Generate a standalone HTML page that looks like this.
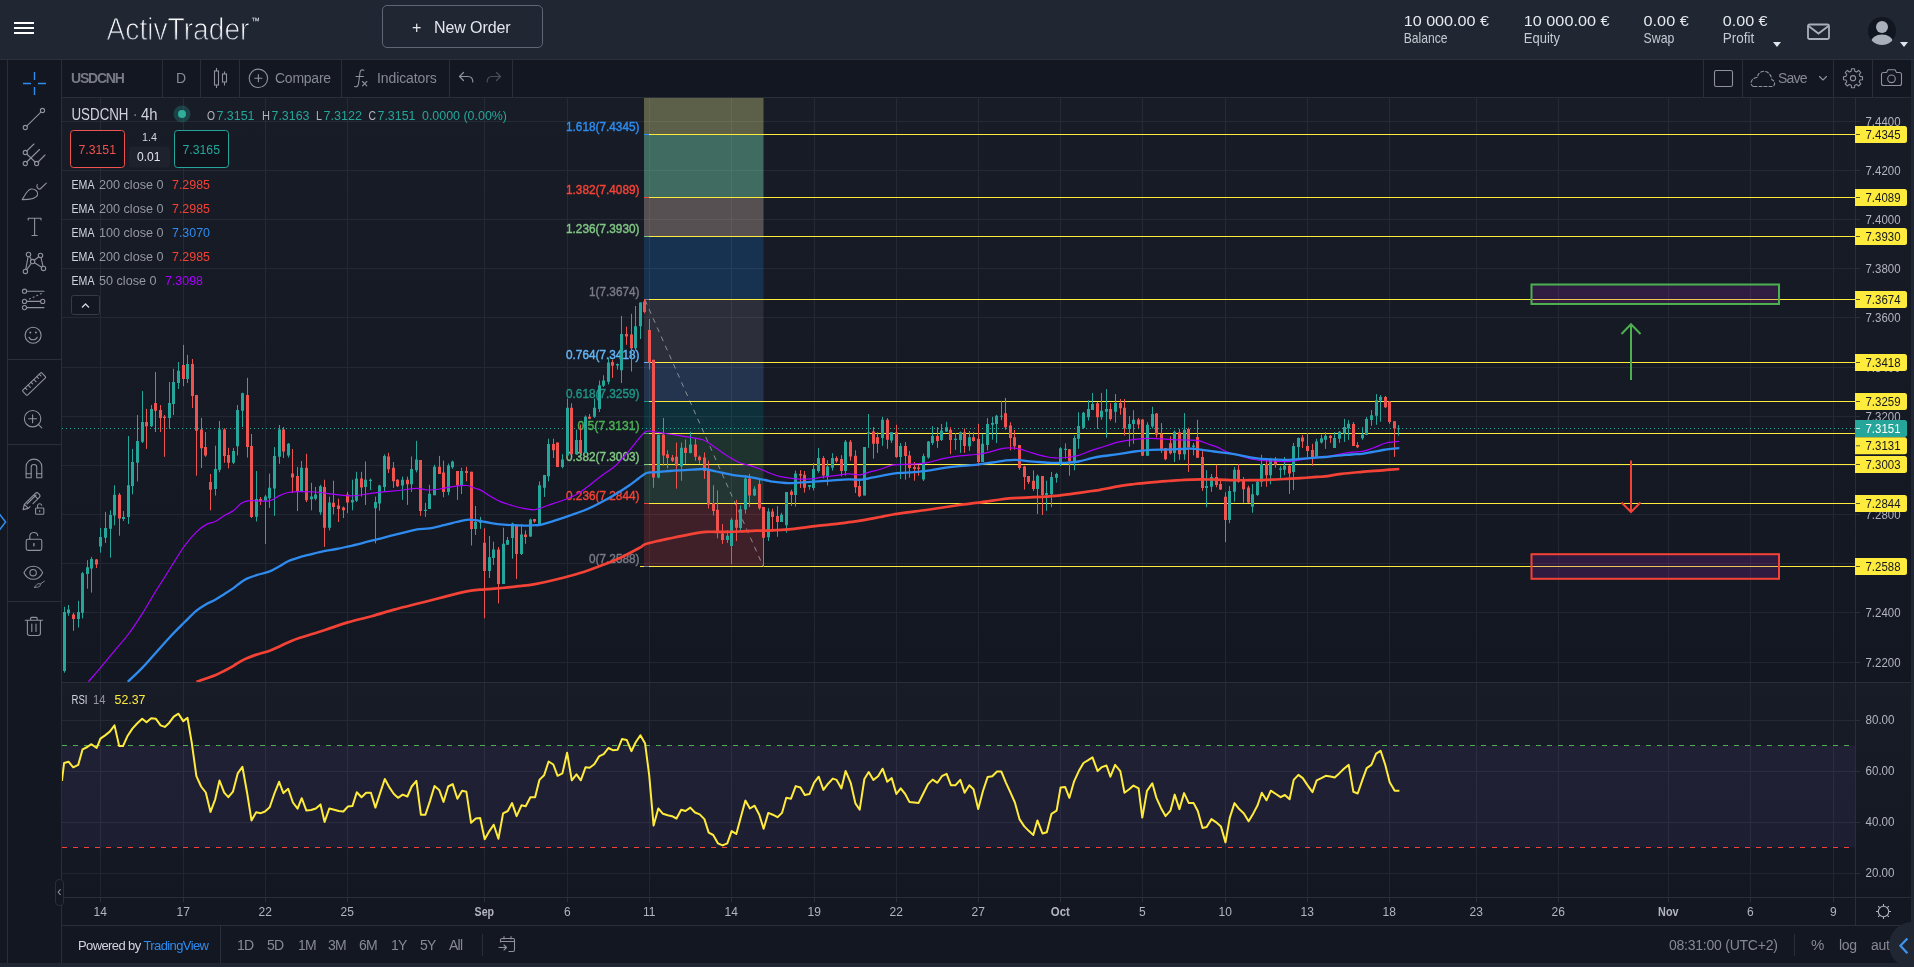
<!DOCTYPE html>
<html><head><meta charset="utf-8"><title>ActivTrader</title><style>
*{box-sizing:border-box;margin:0;padding:0}
html,body{width:1914px;height:967px;overflow:hidden;background:#131722;font-family:"Liberation Sans",sans-serif;color:#b2b5be}
.abs{position:absolute;white-space:nowrap}
#hdr{position:absolute;left:0;top:0;width:1914px;height:59px;background:#202632}
#hdrline{position:absolute;left:0;top:59px;width:1914px;height:1px;background:#2b303c}
#botstrip{position:absolute;left:0;top:963px;width:1914px;height:4px;background:#202632}
#rstrip{position:absolute;left:1911px;top:60px;width:3px;height:903px;background:#202632}
.vl{position:absolute;width:1px;background:#2a2e39}
.hl{position:absolute;height:1px;background:#2a2e39}
.t14{font-size:14px;color:#868993}
.hv{font-size:15px;color:#e3e6ec}
.hk{font-size:14px;color:#c3c8d2}
#chart{position:absolute;left:0;top:0}
</style></head><body><div id="root" style="position:absolute;left:0;top:0;width:1914px;height:967px;will-change:transform">
<svg id="chart" width="1914" height="967" viewBox="0 0 1914 967">
<defs><clipPath id="cm"><rect x="62" y="98" width="1793" height="584"/></clipPath><clipPath id="cr"><rect x="62" y="683" width="1793" height="214"/></clipPath><linearGradient id="pg" x1="0" y1="0" x2="0" y2="1"><stop offset="0" stop-color="#181c27"/><stop offset="1" stop-color="#131722"/></linearGradient></defs>
<rect x="62" y="98" width="1849" height="584" fill="url(#pg)"/>
<rect x="62" y="683" width="1849" height="214" fill="url(#pg)"/>
<rect x="62" y="745.5" width="1793" height="102" fill="#7e57c2" fill-opacity="0.1"/>
<rect x="644" y="98" width="119.500" height="36.5" fill="#5d6048"/>
<rect x="644" y="134.5" width="119.500" height="63.0" fill="#406b60"/>
<rect x="644" y="197.5" width="119.500" height="39.0" fill="#565052"/>
<rect x="644" y="236.5" width="119.500" height="63.0" fill="#163250"/>
<rect x="644" y="299.5" width="119.500" height="63.0" fill="#2c2f3a"/>
<rect x="644" y="362.5" width="119.500" height="39.0" fill="#24344e"/>
<rect x="644" y="401.5" width="119.500" height="32.0" fill="#0e303a"/>
<rect x="644" y="433.5" width="119.500" height="31.0" fill="#1e322e"/>
<rect x="644" y="464.5" width="119.500" height="39.0" fill="#243634"/>
<rect x="644" y="503.5" width="119.500" height="63.0" fill="#402028"/>
<path d="M100.5 98V897M183.5 98V897M265.5 98V897M347.5 98V897M484.5 98V897M567.5 98V897M649.5 98V897M731.5 98V897M814.5 98V897M896.5 98V897M978.5 98V897M1060.5 98V897M1142.5 98V897M1225.5 98V897M1307.5 98V897M1389.5 98V897M1476.5 98V897M1558.5 98V897M1668.5 98V897M1750.5 98V897M1833.5 98V897M62 121.5H1855M62 170.5H1855M62 219.5H1855M62 268.5H1855M62 317.5H1855M62 367.5H1855M62 416.5H1855M62 465.5H1855M62 514.5H1855M62 563.5H1855M62 612.5H1855M62 662.5H1855M62 720.5H1855M62 771.5H1855M62 822.5H1855M62 873.5H1855" stroke="#f0f3fa" stroke-opacity="0.065" stroke-width="1" fill="none" shape-rendering="crispEdges"/>
<path d="M645 300L763 566" stroke="#8a8d96" stroke-width="1" stroke-dasharray="5 5" fill="none"/>
<path d="M62 428.500H1855" stroke="#26a69a" stroke-width="1" stroke-dasharray="1 3" fill="none" shape-rendering="crispEdges"/>
<path d="M644 134.5H1855M644 197.5H1855M644 236.5H1855M644 299.5H1855M644 362.5H1855M644 401.5H1855M644 433.5H1855M644 464.5H1855M644 503.5H1855M640 566.5H1855" stroke="#ffeb3b" stroke-width="1" fill="none" shape-rendering="crispEdges"/>
<path d="M644 134.5H649" stroke="#2e8cf0" stroke-width="1" shape-rendering="crispEdges"/>
<path d="M644 197.5H649" stroke="#f44336" stroke-width="1" shape-rendering="crispEdges"/>
<path d="M644 236.5H649" stroke="#81c784" stroke-width="1" shape-rendering="crispEdges"/>
<path d="M644 299.5H649" stroke="#787b86" stroke-width="1" shape-rendering="crispEdges"/>
<path d="M644 362.5H649" stroke="#64b5f6" stroke-width="1" shape-rendering="crispEdges"/>
<path d="M644 401.5H649" stroke="#1f9485" stroke-width="1" shape-rendering="crispEdges"/>
<path d="M644 433.5H649" stroke="#4caf50" stroke-width="1" shape-rendering="crispEdges"/>
<path d="M644 464.5H649" stroke="#81c784" stroke-width="1" shape-rendering="crispEdges"/>
<path d="M644 503.5H649" stroke="#f44336" stroke-width="1" shape-rendering="crispEdges"/>
<path d="M644 566.5H649" stroke="#787b86" stroke-width="1" shape-rendering="crispEdges"/>
<text x="639.500" y="130.9" text-anchor="end" font-family="Liberation Sans, sans-serif" font-size="12" fill="#2e8cf0" stroke="#2e8cf0" stroke-width="0.400" textLength="73.5" lengthAdjust="spacingAndGlyphs">1.618(7.4345)</text>
<text x="639.500" y="193.9" text-anchor="end" font-family="Liberation Sans, sans-serif" font-size="12" fill="#f44336" stroke="#f44336" stroke-width="0.400" textLength="73.5" lengthAdjust="spacingAndGlyphs">1.382(7.4089)</text>
<text x="639.500" y="232.9" text-anchor="end" font-family="Liberation Sans, sans-serif" font-size="12" fill="#81c784" stroke="#81c784" stroke-width="0.400" textLength="73.5" lengthAdjust="spacingAndGlyphs">1.236(7.3930)</text>
<text x="639.500" y="295.9" text-anchor="end" font-family="Liberation Sans, sans-serif" font-size="12" fill="#787b86" stroke="#787b86" stroke-width="0.400" textLength="50.5" lengthAdjust="spacingAndGlyphs">1(7.3674)</text>
<text x="639.500" y="358.9" text-anchor="end" font-family="Liberation Sans, sans-serif" font-size="12" fill="#64b5f6" stroke="#64b5f6" stroke-width="0.400" textLength="73.5" lengthAdjust="spacingAndGlyphs">0.764(7.3418)</text>
<text x="639.500" y="397.9" text-anchor="end" font-family="Liberation Sans, sans-serif" font-size="12" fill="#1f9485" stroke="#1f9485" stroke-width="0.400" textLength="73.5" lengthAdjust="spacingAndGlyphs">0.618(7.3259)</text>
<text x="639.500" y="429.9" text-anchor="end" font-family="Liberation Sans, sans-serif" font-size="12" fill="#4caf50" stroke="#4caf50" stroke-width="0.400" textLength="62" lengthAdjust="spacingAndGlyphs">0.5(7.3131)</text>
<text x="639.500" y="460.9" text-anchor="end" font-family="Liberation Sans, sans-serif" font-size="12" fill="#81c784" stroke="#81c784" stroke-width="0.400" textLength="73.5" lengthAdjust="spacingAndGlyphs">0.382(7.3003)</text>
<text x="639.500" y="499.9" text-anchor="end" font-family="Liberation Sans, sans-serif" font-size="12" fill="#f44336" stroke="#f44336" stroke-width="0.400" textLength="73.5" lengthAdjust="spacingAndGlyphs">0.236(7.2844)</text>
<text x="639.500" y="562.9" text-anchor="end" font-family="Liberation Sans, sans-serif" font-size="12" fill="#787b86" stroke="#787b86" stroke-width="0.400" textLength="50.5" lengthAdjust="spacingAndGlyphs">0(7.2588)</text>
<g clip-path="url(#cm)">
<path d="M64.5 606.8V672.7M68.5 605.0V615.8M78.5 600.8V627.5M82.5 571.9V618.4M87.5 560.2V588.7M91.5 556.9V592.6M100.5 527.9V552.7M105.5 511.9V542.9M110.5 510.3V557.7M114.5 485.3V525.3M123.5 511.0V521.0M128.5 436.0V524.0M132.5 449.0V494.3M137.5 415.0V481.4M142.5 391.0V443.0M151.5 405.0V427.0M169.5 382.0V428.9M173.5 368.8V415.0M178.5 362.0V389.0M187.5 354.8V383.0M215.5 445.7V495.6M219.5 421.0V472.3M233.5 447.9V464.0M237.5 405.0V455.5M242.5 392.7V427.0M256.5 471.0V521.5M265.5 494.8V544.0M269.5 473.6V507.8M274.5 447.0V515.8M279.5 425.0V463.8M288.5 443.0V457.6M301.5 461.0V492.0M311.5 482.8V510.3M315.5 486.9V500.3M320.5 484.8V514.8M329.5 496.6V530.4M352.5 479.7V510.3M356.5 471.8V502.0M365.5 461.5V504.9M370.5 478.6V490.0M375.5 496.6V543.4M379.5 484.8V510.7M384.5 454.4V491.7M402.5 476.6V499.9M411.5 456.5V492.0M416.5 440.8V472.4M425.5 502.8V516.9M429.5 484.8V509.0M434.5 464.8V495.2M448.5 463.5V495.2M452.5 460.6V468.9M461.5 467.7V494.0M475.5 506.0V535.0M480.5 516.9V528.9M489.5 536.0V578.0M493.5 541.7V565.0M503.5 527.7V584.0M507.5 537.0V545.0M512.5 522.7V558.7M521.5 524.0V555.0M530.5 518.6V537.0M539.5 481.4V525.3M544.5 474.9V496.9M548.5 438.7V481.4M562.5 454.2V468.4M567.5 398.6V455.5M576.5 429.6V454.2M585.5 415.4V452.9M594.5 398.6V418.0M599.5 380.5V412.0M603.5 375.3V387.0M608.5 357.8V384.4M617.5 363.5V369.6M621.5 315.9V383.0M635.5 306.0V350.0M640.5 302.4V339.0M658.5 434.8V478.3M681.5 442.6V480.8M690.5 431.7V453.4M727.5 530.2V543.0M731.5 517.8V564.1M740.5 505.4V531.0M745.5 475.1V513.7M754.5 486.3V496.0M768.5 508.2V541.0M781.5 512.8V522.0M786.5 492.1V532.7M795.5 470.6V506.5M809.5 485.0V489.7M813.5 463.2V490.5M818.5 447.9V472.8M827.5 460.2V485.5M832.5 453.2V470.6M845.5 440.0V475.6M864.5 447.0V495.4M868.5 414.0V447.9M882.5 416.8V445.9M891.5 432.2V443.0M900.5 443.0V479.0M923.5 453.7V481.0M928.5 441.0V458.7M932.5 426.1V445.0M941.5 423.9V441.0M946.5 421.8V432.0M955.5 433.0V449.9M960.5 431.5V452.9M969.5 431.0V450.9M982.5 433.9V462.0M987.5 418.1V450.4M992.5 416.8V439.7M996.5 414.8V443.0M1001.5 400.8V420.1M1037.5 474.4V514.1M1046.5 480.7V510.8M1051.5 471.9V507.2M1056.5 472.8V482.7M1060.5 447.1V466.1M1065.5 443.3V458.7M1074.5 435.5V470.3M1078.5 412.3V448.8M1083.5 411.8V428.9M1088.5 400.3V420.6M1092.5 393.0V410.0M1101.5 392.9V419.8M1106.5 389.1V437.6M1115.5 394.1V422.7M1129.5 416.1V446.6M1133.5 410.2V443.8M1147.5 422.2V456.0M1152.5 406.8V428.4M1174.5 430.5V462.0M1184.5 413.1V459.8M1193.5 442.9V455.3M1206.5 470.2V507.2M1211.5 474.0V491.8M1229.5 486.0V523.2M1234.5 466.9V501.7M1252.5 484.0V512.8M1257.5 479.3V495.9M1261.5 454.8V486.8M1270.5 457.8V484.3M1280.5 466.1V479.0M1284.5 457.0V475.2M1293.5 442.9V490.1M1298.5 437.5V458.7M1316.5 438.8V458.0M1321.5 434.7V443.5M1325.5 432.1V448.9M1334.5 432.1V448.0M1339.5 431.0V442.9M1344.5 418.9V441.9M1348.5 420.2V439.8M1362.5 427.2V439.8M1366.5 417.1V435.0M1371.5 410.0V425.9M1376.5 394.1V424.8M1380.5 395.1V421.7M1398.5 425.1V435.7" stroke="#26a69a" stroke-width="1" fill="none"/>
<path d="M73.5 612.7V630.8M96.5 559.0V568.0M119.5 493.0V535.7M146.5 408.8V448.9M155.5 372.0V432.0M160.5 405.0V432.0M164.5 415.0V456.8M183.5 344.9V386.2M192.5 359.0V408.0M196.5 395.0V475.7M201.5 417.9V468.0M205.5 432.0V456.8M210.5 474.0V510.3M224.5 428.2V462.8M228.5 447.8V468.4M247.5 377.8V457.6M251.5 434.0V518.0M260.5 497.0V505.0M283.5 427.0V458.0M292.5 449.0V493.0M297.5 467.0V511.0M306.5 453.8V502.0M324.5 479.7V546.9M333.5 480.7V514.4M338.5 498.7V522.0M343.5 506.5V518.0M347.5 491.7V513.2M361.5 471.8V496.6M388.5 452.8V473.0M393.5 462.0V487.9M397.5 479.2V487.0M407.5 476.6V504.9M420.5 460.0V515.9M439.5 455.9V474.0M443.5 460.6V497.2M457.5 471.0V499.9M466.5 466.8V481.3M471.5 471.8V545.5M484.5 528.3V618.3M498.5 547.0V603.4M516.5 524.8V579.0M525.5 530.4V543.8M534.5 518.9V522.7M553.5 438.7V458.0M557.5 442.6V467.1M571.5 403.3V454.2M580.5 424.5V452.9M589.5 414.0V419.3M612.5 359.8V377.9M626.5 326.7V344.8M631.5 313.8V371.5M644.5 299.0V313.3M649.5 319.0V369.6M653.5 359.8V487.8M663.5 418.0V465.8M667.5 450.3V468.4M672.5 455.0V462.0M676.5 442.6V488.6M685.5 439.5V463.8M695.5 438.7V460.7M699.5 455.5V463.8M704.5 452.4V478.8M708.5 460.7V508.5M713.5 485.2V515.5M717.5 490.4V538.3M722.5 524.1V543.9M736.5 499.9V541.0M749.5 473.9V507.0M759.5 478.9V509.8M763.5 507.0V567.1M772.5 508.7V531.4M777.5 506.2V536.8M791.5 489.7V505.9M800.5 470.1V488.0M804.5 471.1V492.6M823.5 456.2V478.4M836.5 456.2V462.8M841.5 455.2V476.4M850.5 440.0V460.7M855.5 450.3V493.0M859.5 479.4V497.1M873.5 427.2V458.7M877.5 432.2V452.9M887.5 418.1V448.8M896.5 424.8V457.9M905.5 442.1V479.7M909.5 450.9V477.7M914.5 462.0V480.7M918.5 465.0V475.7M937.5 427.2V447.9M950.5 427.2V454.2M964.5 428.4V452.9M973.5 432.2V441.6M978.5 423.9V466.1M1005.5 397.9V429.7M1010.5 422.3V450.4M1014.5 430.0V449.6M1019.5 445.0V469.8M1024.5 465.8V489.6M1028.5 476.0V484.0M1033.5 470.3V491.0M1042.5 476.0V515.0M1069.5 449.0V475.7M1097.5 402.0V428.9M1110.5 403.2V420.6M1120.5 399.1V414.8M1124.5 399.1V435.5M1138.5 418.1V428.0M1142.5 419.0V456.0M1156.5 413.0V437.6M1161.5 423.1V452.9M1165.5 448.0V460.3M1170.5 436.3V454.5M1179.5 428.9V459.8M1188.5 427.7V471.9M1197.5 419.8V458.0M1202.5 451.2V490.9M1216.5 464.8V487.3M1220.5 480.2V490.0M1225.5 492.3V542.2M1238.5 464.1V482.7M1243.5 476.9V502.8M1248.5 485.6V503.0M1266.5 459.8V486.8M1275.5 457.0V467.8M1289.5 465.0V493.9M1302.5 435.0V447.9M1307.5 433.0V457.0M1312.5 443.8V465.8M1330.5 435.0V442.9M1353.5 422.0V446.0M1357.5 442.1V448.1M1385.5 395.9V408.0M1389.5 401.0V423.8M1394.5 421.0V456.9" stroke="#ef5350" stroke-width="1" fill="none"/>
<path d="M63.0 612.0h3V671.0h-3zM67.0 609.4h3V613.3h-3zM77.0 612.0h3V619.0h-3zM81.0 573.2h3V612.7h-3zM86.0 567.2h3V574.0h-3zM90.0 559.0h3V568.5h-3zM99.0 537.0h3V546.5h-3zM104.0 527.9h3V537.7h-3zM109.0 515.0h3V528.7h-3zM113.0 494.8h3V515.5h-3zM122.0 517.0h3V518.9h-3zM127.0 485.3h3V517.0h-3zM131.0 462.0h3V486.0h-3zM136.0 441.0h3V462.8h-3zM141.0 422.0h3V441.8h-3zM150.0 409.0h3V426.3h-3zM168.0 403.0h3V417.9h-3zM172.0 382.0h3V404.0h-3zM177.0 370.7h3V383.0h-3zM186.0 363.9h3V379.0h-3zM214.0 469.0h3V489.0h-3zM218.0 429.5h3V469.7h-3zM232.0 450.9h3V462.8h-3zM236.0 409.9h3V446.3h-3zM241.0 393.3h3V410.8h-3zM255.0 499.0h3V516.8h-3zM264.0 496.4h3V500.8h-3zM268.0 487.8h3V498.2h-3zM273.0 456.0h3V488.6h-3zM278.0 429.5h3V456.8h-3zM287.0 443.7h3V455.5h-3zM300.0 467.7h3V491.7h-3zM310.0 496.6h3V499.3h-3zM314.0 494.6h3V498.7h-3zM319.0 486.3h3V512.3h-3zM328.0 502.4h3V527.7h-3zM351.0 500.0h3V502.4h-3zM355.0 478.6h3V500.8h-3zM364.0 479.7h3V486.9h-3zM369.0 479.7h3V480.9h-3zM374.0 502.0h3V508.2h-3zM378.0 485.5h3V503.5h-3zM383.0 455.9h3V486.9h-3zM401.0 479.7h3V485.5h-3zM410.0 468.9h3V484.2h-3zM415.0 459.4h3V470.3h-3zM424.0 509.7h3V511.0h-3zM428.0 493.7h3V509.0h-3zM433.0 466.8h3V495.2h-3zM447.0 465.6h3V492.0h-3zM451.0 461.4h3V467.2h-3zM460.0 471.0h3V485.5h-3zM474.0 522.0h3V528.9h-3zM479.0 521.0h3V522.7h-3zM488.0 557.2h3V571.0h-3zM492.0 549.6h3V557.9h-3zM502.0 543.8h3V584.0h-3zM506.0 540.0h3V544.8h-3zM511.0 523.5h3V538.0h-3zM520.0 534.5h3V554.0h-3zM529.0 519.4h3V536.6h-3zM538.0 485.2h3V524.0h-3zM543.0 474.9h3V487.8h-3zM547.0 443.9h3V476.2h-3zM561.0 459.4h3V467.1h-3zM566.0 407.7h3V455.5h-3zM575.0 440.0h3V454.2h-3zM584.0 416.7h3V452.9h-3zM593.0 407.7h3V416.7h-3zM598.0 385.2h3V409.0h-3zM602.0 380.5h3V385.7h-3zM607.0 362.4h3V381.8h-3zM616.0 364.0h3V365.5h-3zM620.0 334.0h3V370.2h-3zM634.0 326.2h3V348.2h-3zM639.0 302.4h3V326.2h-3zM657.0 434.8h3V477.5h-3zM680.0 447.7h3V466.4h-3zM689.0 444.6h3V452.9h-3zM726.0 535.7h3V540.1h-3zM730.0 519.8h3V545.9h-3zM739.0 509.2h3V528.1h-3zM744.0 478.4h3V509.5h-3zM753.0 488.8h3V495.4h-3zM767.0 511.5h3V537.3h-3zM780.0 514.8h3V521.9h-3zM785.0 492.1h3V525.2h-3zM794.0 473.4h3V495.0h-3zM808.0 485.0h3V486.7h-3zM812.0 469.0h3V488.0h-3zM817.0 457.9h3V471.1h-3zM826.0 466.5h3V476.1h-3zM831.0 457.9h3V467.8h-3zM844.0 441.7h3V471.1h-3zM863.0 447.0h3V495.4h-3zM867.0 432.2h3V433.9h-3zM881.0 419.8h3V438.0h-3zM890.0 432.2h3V440.5h-3zM899.0 445.9h3V457.0h-3zM922.0 455.9h3V479.4h-3zM927.0 441.6h3V457.5h-3zM931.0 436.0h3V443.0h-3zM940.0 430.6h3V440.0h-3zM945.0 427.2h3V431.4h-3zM954.0 438.8h3V440.0h-3zM959.0 432.2h3V440.0h-3zM968.0 437.2h3V446.3h-3zM981.0 443.8h3V462.0h-3zM986.0 423.9h3V445.0h-3zM991.0 423.1h3V424.8h-3zM995.0 415.7h3V423.9h-3zM1000.0 415.7h3V416.8h-3zM1036.0 475.7h3V489.0h-3zM1045.0 493.0h3V495.1h-3zM1050.0 476.9h3V494.3h-3zM1055.0 474.1h3V477.7h-3zM1059.0 448.3h3V464.2h-3zM1064.0 448.8h3V449.9h-3zM1073.0 438.0h3V461.5h-3zM1077.0 426.1h3V438.8h-3zM1082.0 412.8h3V427.7h-3zM1087.0 409.0h3V417.3h-3zM1091.0 404.1h3V409.9h-3zM1100.0 410.7h3V417.3h-3zM1105.0 409.0h3V411.8h-3zM1114.0 402.9h3V411.8h-3zM1128.0 423.9h3V428.9h-3zM1132.0 419.8h3V423.9h-3zM1146.0 424.7h3V455.8h-3zM1151.0 414.0h3V426.4h-3zM1173.0 431.7h3V452.9h-3zM1183.0 429.7h3V454.2h-3zM1192.0 445.4h3V447.1h-3zM1205.0 486.0h3V488.0h-3zM1210.0 476.9h3V486.8h-3zM1228.0 490.9h3V519.9h-3zM1233.0 469.7h3V491.8h-3zM1251.0 494.2h3V506.7h-3zM1256.0 481.8h3V495.1h-3zM1260.0 464.1h3V481.8h-3zM1269.0 459.2h3V475.2h-3zM1279.0 468.6h3V469.7h-3zM1283.0 465.8h3V469.7h-3zM1292.0 445.9h3V471.9h-3zM1297.0 438.0h3V447.1h-3zM1315.0 441.6h3V457.8h-3zM1320.0 438.3h3V442.6h-3zM1324.0 435.7h3V439.8h-3zM1333.0 438.0h3V447.9h-3zM1338.0 431.8h3V438.8h-3zM1343.0 426.9h3V433.4h-3zM1347.0 423.8h3V428.2h-3zM1361.0 434.4h3V438.3h-3zM1365.0 418.9h3V434.9h-3zM1370.0 415.2h3V420.0h-3zM1375.0 400.3h3V415.8h-3zM1379.0 396.9h3V400.5h-3zM1397.0 428.2h3V429.2h-3z" fill="#26a69a"/>
<path d="M72.0 614.6h3V619.0h-3zM95.0 559.5h3V564.6h-3zM118.0 494.8h3V518.4h-3zM145.0 422.0h3V426.3h-3zM154.0 403.0h3V410.8h-3zM159.0 410.0h3V417.9h-3zM163.0 416.8h3V418.0h-3zM182.0 364.9h3V379.0h-3zM191.0 363.9h3V395.9h-3zM195.0 395.0h3V430.8h-3zM200.0 429.5h3V448.3h-3zM204.0 447.0h3V455.5h-3zM209.0 481.9h3V489.7h-3zM223.0 429.5h3V456.0h-3zM227.0 455.0h3V462.8h-3zM246.0 395.0h3V447.0h-3zM250.0 446.0h3V517.0h-3zM259.0 499.0h3V501.5h-3zM282.0 429.5h3V451.6h-3zM291.0 473.6h3V477.5h-3zM296.0 476.0h3V491.7h-3zM305.0 467.7h3V500.3h-3zM323.0 486.9h3V527.7h-3zM332.0 502.8h3V507.0h-3zM337.0 505.5h3V509.0h-3zM342.0 507.6h3V510.3h-3zM346.0 494.6h3V502.4h-3zM360.0 478.6h3V487.5h-3zM387.0 456.5h3V469.3h-3zM392.0 467.7h3V481.3h-3zM396.0 479.7h3V486.3h-3zM406.0 479.7h3V484.2h-3zM419.0 460.0h3V511.0h-3zM438.0 466.8h3V473.9h-3zM442.0 472.4h3V492.0h-3zM456.0 471.0h3V485.5h-3zM465.0 471.0h3V473.0h-3zM470.0 471.8h3V528.9h-3zM483.0 542.8h3V571.0h-3zM497.0 549.6h3V584.0h-3zM515.0 524.8h3V554.0h-3zM524.0 534.5h3V537.0h-3zM533.0 518.9h3V521.4h-3zM552.0 443.9h3V450.3h-3zM556.0 442.6h3V467.1h-3zM570.0 407.7h3V454.2h-3zM579.0 440.0h3V452.9h-3zM588.0 416.7h3V418.8h-3zM611.0 361.9h3V365.8h-3zM625.0 334.0h3V336.5h-3zM630.0 334.5h3V348.2h-3zM643.0 301.6h3V312.0h-3zM648.0 330.0h3V362.4h-3zM652.0 359.8h3V477.5h-3zM662.0 434.8h3V455.5h-3zM666.0 454.2h3V458.0h-3zM671.0 457.6h3V460.7h-3zM675.0 456.8h3V465.8h-3zM684.0 447.7h3V452.9h-3zM694.0 444.6h3V456.8h-3zM698.0 456.8h3V460.2h-3zM703.0 457.6h3V471.0h-3zM707.0 469.7h3V504.6h-3zM712.0 503.3h3V511.1h-3zM716.0 509.8h3V533.0h-3zM721.0 533.5h3V540.1h-3zM735.0 519.8h3V527.7h-3zM748.0 478.4h3V495.4h-3zM758.0 483.9h3V508.2h-3zM762.0 507.0h3V537.7h-3zM771.0 511.5h3V517.0h-3zM776.0 516.1h3V521.9h-3zM790.0 491.6h3V495.0h-3zM799.0 473.9h3V475.6h-3zM803.0 474.8h3V487.7h-3zM822.0 457.9h3V475.6h-3zM835.0 457.9h3V461.2h-3zM840.0 459.0h3V471.1h-3zM849.0 441.7h3V456.6h-3zM854.0 455.7h3V487.2h-3zM858.0 486.0h3V496.3h-3zM872.0 431.4h3V443.8h-3zM876.0 437.2h3V443.8h-3zM886.0 419.8h3V439.7h-3zM895.0 432.2h3V457.0h-3zM904.0 445.9h3V455.9h-3zM908.0 455.4h3V468.1h-3zM913.0 467.0h3V469.1h-3zM917.0 467.5h3V469.1h-3zM936.0 436.0h3V441.0h-3zM949.0 429.7h3V440.0h-3zM963.0 432.2h3V445.9h-3zM972.0 437.2h3V441.0h-3zM977.0 438.8h3V462.0h-3zM1004.0 413.2h3V427.2h-3zM1009.0 425.6h3V438.0h-3zM1013.0 437.2h3V446.3h-3zM1018.0 445.0h3V468.1h-3zM1023.0 466.5h3V476.9h-3zM1027.0 476.1h3V481.9h-3zM1032.0 480.7h3V489.0h-3zM1041.0 476.1h3V495.1h-3zM1068.0 449.3h3V461.2h-3zM1096.0 403.2h3V417.3h-3zM1109.0 409.0h3V418.9h-3zM1119.0 402.9h3V408.2h-3zM1123.0 407.8h3V428.4h-3zM1137.0 419.4h3V424.4h-3zM1141.0 419.4h3V455.8h-3zM1155.0 413.5h3V434.7h-3zM1160.0 433.8h3V449.6h-3zM1164.0 448.2h3V459.2h-3zM1169.0 443.3h3V453.2h-3zM1178.0 432.2h3V454.2h-3zM1187.0 428.9h3V447.6h-3zM1196.0 437.1h3V457.8h-3zM1201.0 457.0h3V488.0h-3zM1215.0 476.9h3V485.1h-3zM1219.0 484.0h3V489.6h-3zM1224.0 496.7h3V519.9h-3zM1237.0 469.7h3V481.8h-3zM1242.0 479.3h3V489.3h-3zM1247.0 487.6h3V502.5h-3zM1265.0 464.1h3V475.2h-3zM1274.0 460.3h3V464.8h-3zM1288.0 465.8h3V473.6h-3zM1301.0 437.6h3V441.6h-3zM1306.0 445.9h3V450.9h-3zM1311.0 449.9h3V458.2h-3zM1329.0 435.7h3V438.0h-3zM1352.0 424.1h3V446.0h-3zM1356.0 445.0h3V447.3h-3zM1384.0 396.9h3V407.2h-3zM1388.0 401.6h3V422.0h-3zM1393.0 421.2h3V428.4h-3z" fill="#ef5350"/>
<path d="M88.4 681.8C90.4 679.4 96.2 672.8 100.6 667.6C105.0 662.4 109.9 656.4 114.6 650.8C119.2 645.2 123.8 640.2 128.5 634.0C133.2 627.8 137.8 620.6 142.5 613.3C147.2 606.0 151.8 597.5 156.5 590.0C161.2 582.5 165.8 575.3 170.4 568.0C175.1 560.7 180.1 552.0 184.4 546.0C188.8 540.0 192.9 535.4 196.5 531.8C200.1 528.2 203.0 526.3 206.1 524.6C209.2 522.9 212.1 523.0 215.2 521.5C218.3 520.0 221.4 517.3 224.5 515.5C227.6 513.7 230.8 512.6 233.5 510.6C236.2 508.6 238.7 505.0 241.0 503.4C243.3 501.8 244.9 501.2 247.5 500.8C250.1 500.4 252.8 500.8 256.5 500.8C260.2 500.8 265.9 501.7 269.7 500.8C273.5 499.9 276.4 497.0 279.5 495.6C282.6 494.2 285.2 493.1 288.6 492.5C292.0 491.9 295.5 491.8 300.0 491.7C304.5 491.6 309.6 491.5 315.7 492.0C321.8 492.5 330.2 494.0 336.4 494.6C342.6 495.2 347.4 496.0 352.9 495.8C358.4 495.6 364.0 494.4 369.5 493.7C375.0 493.0 380.5 492.3 386.0 491.7C391.5 491.1 397.4 490.6 402.6 490.0C407.8 489.4 412.9 488.3 417.0 488.3C421.1 488.3 423.6 489.9 427.4 490.0C431.2 490.1 435.3 489.6 439.8 489.0C444.3 488.4 449.8 486.9 454.3 486.3C458.8 485.7 463.2 485.2 466.7 485.5C470.1 485.8 472.6 487.5 475.0 488.3C477.4 489.1 478.8 489.1 481.2 490.4C483.6 491.6 486.4 494.0 489.5 495.8C492.6 497.6 496.4 499.9 499.8 501.4C503.2 502.9 506.4 503.8 510.2 504.9C514.0 506.0 518.5 507.4 522.6 508.2C526.7 509.0 530.7 510.2 535.0 509.7C539.3 509.2 543.5 506.8 548.3 505.2C553.1 503.6 559.1 501.8 563.8 500.0C568.5 498.2 572.4 496.8 576.7 494.3C581.0 491.8 585.3 488.4 589.6 485.2C593.9 482.0 598.3 478.1 602.6 474.9C606.9 471.7 611.2 469.7 615.5 465.8C619.8 461.9 624.5 456.1 628.4 451.6C632.3 447.1 636.1 441.9 638.8 438.7C641.5 435.5 642.9 433.5 644.7 432.2C646.5 430.9 647.1 430.9 649.6 431.0C652.1 431.1 655.3 432.1 659.5 432.7C663.7 433.3 669.8 434.0 675.0 434.8C680.2 435.6 685.8 436.5 690.5 437.4C695.2 438.3 699.6 438.5 703.5 440.0C707.4 441.5 709.9 443.8 713.8 446.4C717.7 449.0 722.4 452.8 726.7 455.5C731.0 458.2 735.3 460.9 739.6 462.7C743.9 464.5 748.4 465.0 752.6 466.4C756.8 467.8 762.2 469.9 765.0 471.0C767.8 472.1 766.5 471.9 769.1 472.8C771.7 473.8 776.3 475.7 780.7 476.7C785.1 477.7 790.6 478.5 795.6 478.9C800.6 479.3 806.1 479.2 810.5 478.9C814.9 478.6 817.9 477.8 822.0 477.2C826.1 476.6 830.9 476.2 835.3 475.6C839.7 475.1 844.4 474.0 848.5 473.9C852.6 473.8 856.2 475.2 860.1 474.8C864.0 474.4 868.4 472.3 871.7 471.4C875.0 470.5 876.4 470.6 880.0 469.5C883.6 468.4 888.1 465.7 893.1 464.8C898.1 463.9 904.2 464.5 909.7 464.2C915.2 463.9 920.7 463.7 926.2 462.8C931.7 461.9 937.3 459.9 942.8 458.7C948.3 457.5 953.8 456.6 959.3 455.9C964.8 455.2 970.9 455.1 975.9 454.5C980.9 453.9 985.0 453.1 989.1 452.1C993.2 451.2 997.4 449.5 1000.7 448.8C1004.0 448.1 1006.0 447.9 1009.0 447.9C1012.0 447.9 1015.0 448.0 1018.9 448.8C1022.8 449.6 1027.7 451.6 1032.1 452.9C1036.5 454.2 1041.5 455.7 1045.4 456.5C1049.3 457.3 1051.7 457.7 1055.3 457.9C1058.9 458.1 1063.0 457.9 1066.9 457.5C1070.8 457.1 1074.4 456.6 1078.5 455.4C1082.6 454.2 1088.1 451.6 1091.7 450.4C1095.3 449.1 1095.6 449.3 1100.0 447.9C1104.4 446.5 1112.3 443.5 1118.1 442.1C1123.9 440.7 1129.2 439.9 1134.7 439.3C1140.2 438.7 1145.7 438.3 1151.2 438.3C1156.7 438.3 1162.3 439.0 1167.8 439.3C1173.3 439.6 1179.3 439.8 1184.3 440.0C1189.3 440.2 1193.7 439.8 1197.6 440.4C1201.5 441.0 1204.2 442.7 1207.5 443.8C1210.8 444.9 1214.1 445.7 1217.4 447.1C1220.7 448.5 1223.4 450.6 1227.3 452.0C1231.2 453.4 1236.2 454.6 1240.6 455.8C1245.0 457.1 1249.4 458.7 1253.8 459.5C1258.2 460.3 1262.7 460.5 1267.1 460.8C1271.5 461.1 1276.4 461.4 1280.3 461.5C1284.2 461.6 1286.9 461.8 1290.2 461.5C1293.5 461.2 1296.3 460.4 1300.2 459.8C1304.1 459.2 1309.3 458.4 1313.4 457.8C1317.5 457.2 1322.1 456.8 1325.0 456.5C1327.9 456.2 1328.3 456.3 1331.0 455.9C1333.7 455.4 1338.0 454.4 1341.4 453.8C1344.9 453.2 1348.3 452.6 1351.7 452.2C1355.1 451.8 1358.5 452.0 1362.0 451.4C1365.5 450.8 1368.9 449.5 1372.4 448.3C1375.9 447.1 1380.0 445.0 1382.8 444.0C1385.6 443.0 1386.3 442.8 1389.0 442.4C1391.7 442.0 1397.4 441.6 1399.1 441.4" stroke="#aa00ff" stroke-width="1.2" fill="none"/>
<path d="M127.8 681.8C130.2 679.4 137.7 672.6 142.5 667.6C147.3 662.6 151.8 657.2 156.5 652.0C161.2 646.8 165.8 641.5 170.4 636.5C175.1 631.5 180.1 626.6 184.4 622.3C188.8 618.0 192.9 613.7 196.5 610.7C200.1 607.7 203.0 606.0 206.1 604.2C209.2 602.4 212.1 601.5 215.2 599.8C218.3 598.1 221.4 595.8 224.5 593.9C227.6 592.0 230.8 590.2 233.5 588.2C236.2 586.2 238.7 583.8 241.0 582.2C243.3 580.6 244.9 579.6 247.5 578.4C250.1 577.2 252.8 576.4 256.5 575.2C260.2 574.0 265.9 572.9 269.7 571.4C273.5 569.9 276.4 567.9 279.5 566.2C282.6 564.5 285.2 562.5 288.6 561.0C292.0 559.5 296.9 558.1 300.0 557.1C303.1 556.1 303.8 556.1 307.4 555.2C311.0 554.3 317.1 552.7 321.9 551.7C326.7 550.7 331.9 549.9 336.4 549.0C340.9 548.1 344.3 547.3 348.8 546.3C353.3 545.3 358.5 544.0 363.3 542.8C368.1 541.6 373.3 540.4 377.8 539.2C382.3 538.1 385.7 537.0 390.2 535.9C394.7 534.8 400.2 533.5 404.7 532.4C409.2 531.3 412.9 530.0 417.0 529.3C421.1 528.6 425.0 529.0 429.5 528.3C434.0 527.6 439.5 526.2 444.0 525.2C448.5 524.2 452.6 522.9 456.4 522.0C460.2 521.1 463.6 520.1 466.7 519.8C469.8 519.5 471.9 519.8 475.0 520.2C478.1 520.6 481.6 521.4 485.4 522.0C489.2 522.6 493.3 523.6 497.8 524.1C502.3 524.6 507.8 525.0 512.3 525.2C516.8 525.5 520.9 525.6 524.7 525.6C528.5 525.6 532.4 525.3 535.0 525.2C537.6 525.1 537.0 525.6 540.5 524.8C544.0 524.0 550.8 521.8 556.0 520.2C561.2 518.6 566.3 516.8 571.5 515.0C576.7 513.2 581.8 511.6 587.0 509.3C592.2 507.1 597.9 504.0 602.6 501.5C607.4 499.0 611.2 496.9 615.5 494.3C619.8 491.7 624.5 488.7 628.4 486.0C632.3 483.3 635.8 480.5 638.8 478.3C641.8 476.1 643.9 474.0 646.5 473.0C649.1 472.0 650.4 472.6 654.3 472.3C658.2 472.0 664.6 471.4 669.8 471.0C675.0 470.6 679.7 470.5 685.3 470.2C690.9 469.9 698.3 468.8 703.5 469.0C708.7 469.2 711.7 470.5 716.4 471.5C721.1 472.5 726.7 474.0 731.9 474.9C737.1 475.8 741.9 475.8 747.4 476.7C752.9 477.6 760.8 479.2 765.0 480.0C769.2 480.8 768.9 481.2 772.4 481.7C775.9 482.2 781.3 482.8 785.7 483.0C790.1 483.2 794.2 482.9 798.9 482.7C803.6 482.5 808.6 482.0 813.8 481.7C819.0 481.4 824.5 481.0 830.3 480.6C836.1 480.2 843.2 479.5 848.5 479.4C853.8 479.2 857.9 480.0 861.8 479.7C865.7 479.4 868.7 478.3 871.7 477.7C874.7 477.1 876.4 476.8 880.0 476.1C883.6 475.4 888.1 474.2 893.1 473.6C898.1 473.0 904.2 472.9 909.7 472.4C915.2 471.9 920.7 471.5 926.2 470.8C931.7 470.1 937.3 468.9 942.8 468.1C948.3 467.3 953.8 466.7 959.3 466.1C964.8 465.6 970.4 465.4 975.9 464.8C981.4 464.2 987.4 463.2 992.4 462.5C997.4 461.8 1001.8 460.8 1005.7 460.3C1009.6 459.9 1012.3 459.7 1015.6 459.8C1018.9 459.9 1021.6 460.4 1025.5 460.8C1029.4 461.2 1034.4 461.7 1038.8 462.0C1043.2 462.3 1047.6 462.7 1052.0 462.8C1056.4 462.9 1060.8 463.0 1065.2 462.8C1069.6 462.6 1074.1 462.3 1078.5 461.5C1082.9 460.7 1088.1 459.0 1091.7 458.2C1095.3 457.4 1095.6 457.2 1100.0 456.5C1104.4 455.8 1112.3 455.0 1118.1 454.2C1123.9 453.4 1129.2 452.2 1134.7 451.5C1140.2 450.8 1146.2 450.2 1151.2 449.9C1156.2 449.6 1160.0 449.7 1164.4 449.6C1168.8 449.5 1173.3 449.4 1177.7 449.2C1182.1 449.0 1187.0 448.6 1190.9 448.7C1194.8 448.8 1197.0 449.1 1200.9 449.6C1204.8 450.1 1209.7 450.9 1214.1 451.5C1218.5 452.1 1222.9 452.6 1227.3 453.2C1231.7 453.8 1236.2 454.5 1240.6 455.3C1245.0 456.1 1249.4 457.2 1253.8 457.8C1258.2 458.4 1262.1 458.9 1267.1 459.2C1272.1 459.5 1278.6 459.8 1283.6 459.8C1288.6 459.8 1292.5 459.5 1296.9 459.2C1301.3 458.9 1305.4 458.6 1310.1 458.2C1314.8 457.8 1321.5 457.3 1325.0 457.0C1328.5 456.7 1328.3 456.7 1331.0 456.4C1333.7 456.1 1338.0 455.6 1341.4 455.3C1344.9 455.0 1348.3 454.8 1351.7 454.5C1355.1 454.2 1358.5 454.2 1362.0 453.8C1365.5 453.4 1368.9 452.6 1372.4 452.0C1375.9 451.4 1379.7 450.5 1382.8 450.0C1385.9 449.5 1388.2 449.2 1391.0 448.9C1393.8 448.6 1397.9 448.2 1399.3 448.1" stroke="#2e8cf0" stroke-width="2.300" fill="none" stroke-linejoin="round"/>
<path d="M196.5 681.8C198.1 681.2 203.0 679.5 206.1 678.4C209.2 677.3 212.1 676.6 215.2 675.3C218.3 674.0 221.4 672.3 224.5 670.7C227.6 669.1 230.8 667.4 233.5 665.8C236.2 664.2 238.7 662.4 241.0 661.1C243.3 659.8 244.9 659.1 247.5 658.0C250.1 656.9 252.8 655.8 256.5 654.6C260.2 653.4 265.9 652.2 269.7 650.8C273.5 649.4 276.4 647.8 279.5 646.4C282.6 645.0 285.2 643.6 288.6 642.2C292.0 640.8 293.9 639.8 300.0 637.8C306.1 635.8 317.0 632.6 325.0 630.0C333.0 627.4 340.0 624.7 347.8 622.4C355.6 620.1 363.9 618.3 371.6 616.2C379.4 614.1 386.7 611.7 394.3 609.6C401.9 607.5 409.4 605.7 417.0 603.8C424.6 601.9 431.5 600.1 439.8 598.0C448.1 595.9 459.2 592.9 466.7 591.4C474.1 589.9 478.6 589.9 484.5 589.3C490.4 588.7 496.2 588.5 501.9 588.0C507.6 587.5 513.0 586.9 518.5 586.2C524.0 585.6 528.8 585.2 535.0 584.1C541.2 583.0 548.5 581.4 556.0 579.5C563.5 577.6 572.7 575.2 580.0 573.0C587.3 570.8 593.3 568.5 600.0 566.0C606.7 563.5 613.3 561.1 620.0 558.0C626.7 554.9 635.8 549.9 640.0 547.6C644.2 545.3 642.2 545.3 645.0 544.3C647.8 543.2 651.9 542.4 656.6 541.3C661.3 540.2 667.6 538.9 673.1 537.7C678.6 536.5 684.2 535.3 689.7 534.3C695.2 533.3 700.7 532.3 706.2 531.9C711.7 531.5 717.3 532.0 722.8 531.9C728.3 531.8 733.8 531.7 739.3 531.5C744.8 531.3 750.4 530.9 755.9 530.7C761.4 530.5 766.9 530.6 772.4 530.4C777.9 530.2 783.5 529.9 789.0 529.4C794.5 528.9 800.0 528.1 805.5 527.4C811.0 526.7 816.5 526.0 822.0 525.4C827.5 524.8 833.1 524.3 838.6 523.6C844.1 522.9 849.7 522.2 855.2 521.4C860.7 520.6 867.6 519.3 871.7 518.6C875.8 517.9 876.4 517.7 880.0 517.0C883.6 516.3 888.1 515.3 893.1 514.5C898.1 513.7 904.2 512.9 909.7 512.1C915.2 511.4 920.7 510.8 926.2 510.0C931.7 509.2 937.3 508.3 942.8 507.5C948.3 506.7 953.8 505.8 959.3 505.0C964.8 504.2 970.4 503.6 975.9 502.9C981.4 502.2 986.9 501.4 992.4 500.6C997.9 499.9 1003.5 498.9 1009.0 498.4C1014.5 497.9 1020.0 497.9 1025.5 497.6C1031.0 497.3 1036.6 497.1 1042.1 496.8C1047.6 496.5 1053.1 496.2 1058.6 495.6C1064.1 495.0 1069.7 494.2 1075.2 493.4C1080.7 492.6 1087.6 491.6 1091.7 491.0C1095.8 490.4 1095.6 490.6 1100.0 489.8C1104.4 489.0 1112.3 487.3 1118.1 486.3C1123.9 485.3 1129.2 484.7 1134.7 484.0C1140.2 483.3 1145.7 482.8 1151.2 482.3C1156.7 481.8 1162.3 481.4 1167.8 481.0C1173.3 480.6 1178.8 480.1 1184.3 479.8C1189.8 479.5 1195.4 479.3 1200.9 479.3C1206.4 479.3 1211.9 479.6 1217.4 479.7C1222.9 479.8 1228.5 480.1 1234.0 480.2C1239.5 480.3 1245.0 480.3 1250.5 480.2C1256.0 480.1 1261.6 480.0 1267.1 479.8C1272.6 479.6 1278.1 479.3 1283.6 479.0C1289.1 478.7 1294.7 478.6 1300.2 478.2C1305.7 477.8 1312.6 477.2 1316.7 476.9C1320.8 476.6 1320.9 476.9 1325.0 476.4C1329.1 475.9 1335.2 474.6 1341.4 473.8C1347.6 473.1 1355.1 472.5 1362.0 471.9C1368.9 471.3 1376.6 470.8 1382.8 470.3C1389.0 469.8 1396.5 469.2 1399.3 469.0" stroke="#f44336" stroke-width="2.700" fill="none" stroke-linejoin="round"/>
</g>
<rect x="1531.500" y="284.500" width="247.500" height="19.500" fill="#9c27b0" fill-opacity="0.2" stroke="#4caf50" stroke-width="2"/>
<rect x="1531.500" y="554.200" width="247.500" height="24.600" fill="#9c27b0" fill-opacity="0.2" stroke="#f44336" stroke-width="2"/>
<path d="M1631 380V324.500M1621.500 334L1631 324.200L1640.500 334" stroke="#4caf50" stroke-width="2" fill="none"/>
<path d="M1631 460.500V511.500M1621.500 502.500L1631 512L1640.500 502.500" stroke="#f44336" stroke-width="2" fill="none"/>
<path d="M62 745.500H1855" stroke="#4caf50" stroke-width="1" stroke-dasharray="5 6" fill="none" shape-rendering="crispEdges"/>
<path d="M62 847.500H1855" stroke="#f44336" stroke-width="1" stroke-dasharray="5 6" fill="none" shape-rendering="crispEdges"/>
<g clip-path="url(#cr)"><path d="M61.9 780.9L64.1 763.0L68.5 761.7L73.2 767.3L78.2 764.9L82.6 749.3L87.3 747.0L91.4 744.2L96.7 748.0L100.4 738.6L105.1 735.4L109.8 731.6L114.5 725.4L119.2 746.1L123.0 746.1L127.7 735.7L132.4 728.6L137.1 723.5L142.2 718.8L146.5 722.2L151.2 718.2L155.9 718.8L160.6 725.4L164.8 726.9L169.1 722.9L173.8 716.6L178.5 713.7L183.2 721.1L187.5 717.9L191.7 742.3L196.4 776.2L201.1 786.5L205.8 792.5L210.5 811.9L215.2 799.3L219.5 780.5L224.2 792.7L228.3 797.2L233.0 791.6L237.7 773.4L242.4 766.8L247.1 792.7L251.5 820.4L256.2 812.3L260.9 813.2L265.0 811.5L269.7 807.2L274.4 793.5L279.1 781.8L283.4 793.1L288.2 788.8L292.9 802.5L297.6 808.7L301.7 798.2L306.4 810.6L311.1 810.0L315.8 808.5L320.5 804.4L324.6 821.9L329.3 808.5L334.2 809.7L338.7 811.0L343.4 811.5L347.8 806.6L352.5 805.9L356.8 792.2L361.5 797.2L366.2 792.7L370.9 792.7L375.4 807.6L380.1 793.1L384.8 779.0L389.2 787.1L393.9 794.0L398.0 797.8L402.7 794.6L407.4 796.5L411.7 786.5L416.4 780.9L420.9 814.7L425.4 814.7L430.1 800.6L434.5 786.0L439.2 789.9L443.5 801.9L448.2 786.5L452.7 784.1L457.4 798.7L462.1 790.8L466.4 791.8L471.1 822.8L475.8 818.5L480.2 818.1L484.7 839.2L489.4 831.1L493.7 824.7L498.4 838.8L503.1 813.4L507.8 811.0L512.1 803.1L516.6 816.1L521.5 805.3L525.7 806.3L530.4 797.2L535.1 797.2L539.4 779.9L544.1 775.2L548.6 761.5L553.3 764.5L557.6 775.8L562.4 773.4L567.1 752.7L571.8 780.3L576.5 774.3L580.8 780.3L585.5 767.3L589.6 767.7L594.3 764.3L599.0 756.4L603.7 754.2L608.4 748.0L612.8 750.2L617.5 749.8L622.0 739.1L626.7 739.9L631.4 751.2L635.7 742.3L640.4 735.2L645.1 743.6L649.2 775.2L653.6 825.6L658.3 808.5L663.0 813.8L667.7 815.3L672.0 816.2L676.5 818.5L681.2 809.7L685.5 811.0L690.3 807.6L695.0 812.5L699.7 814.4L704.4 819.1L708.7 832.6L713.2 835.0L717.9 843.3L722.6 845.4L727.3 843.3L731.6 831.1L736.3 833.9L741.0 816.6L745.4 800.6L749.9 808.5L754.6 805.7L759.3 814.7L763.6 828.8L768.3 812.9L772.8 814.7L777.5 817.2L782.0 812.9L786.3 797.8L791.0 798.7L795.7 786.1L800.4 787.5L804.8 795.0L809.5 794.0L814.0 782.8L818.7 776.7L823.4 789.9L828.1 783.7L832.8 778.6L836.6 779.9L841.4 788.4L845.6 770.9L850.7 782.8L855.4 803.4L859.7 809.7L864.4 779.0L868.7 772.0L873.4 779.9L878.1 776.2L882.6 768.7L887.3 781.8L891.7 778.1L896.4 794.0L900.7 788.4L905.2 794.0L909.5 802.1L914.2 802.5L918.6 802.9L923.3 793.5L928.0 784.1L932.7 779.6L937.4 782.8L941.9 776.2L946.6 773.9L950.9 785.2L955.6 785.2L960.3 779.9L964.6 792.7L969.3 785.2L973.5 789.3L978.2 809.1L982.9 791.2L987.6 777.1L992.3 776.2L997.0 771.5L1001.3 771.5L1006.0 782.8L1010.5 792.7L1014.9 802.5L1019.6 819.4L1024.3 826.4L1029.0 831.1L1033.3 835.0L1037.4 820.4L1042.5 833.5L1046.8 832.2L1051.5 813.8L1056.6 810.6L1060.6 787.5L1065.1 786.9L1069.4 797.8L1074.1 781.3L1078.8 771.1L1083.5 763.0L1088.2 760.2L1092.5 757.4L1097.6 771.1L1101.9 767.1L1106.5 765.5L1110.4 776.7L1115.1 764.9L1120.3 771.1L1124.5 792.7L1129.2 789.3L1133.5 785.6L1138.6 788.4L1142.3 817.6L1147.0 790.8L1152.3 783.3L1156.4 797.8L1161.1 808.2L1165.5 816.1L1170.5 810.6L1174.7 794.6L1179.4 809.1L1184.1 793.1L1188.8 803.1L1193.5 802.9L1197.8 811.0L1202.5 827.9L1206.6 827.0L1211.5 819.1L1216.2 822.3L1220.9 826.4L1225.5 842.4L1229.8 817.6L1234.5 803.1L1239.2 809.1L1243.9 813.4L1248.6 821.3L1253.3 813.4L1257.6 805.3L1261.8 792.7L1266.5 800.3L1270.8 790.7L1275.9 794.0L1280.6 797.2L1284.9 795.0L1289.6 799.3L1293.7 779.9L1298.4 774.9L1302.8 778.1L1307.8 785.6L1312.5 792.2L1316.7 780.3L1321.4 778.1L1325.7 775.8L1330.4 776.6L1334.7 777.5L1339.2 773.4L1343.9 768.7L1348.7 764.9L1353.4 791.8L1357.7 793.5L1362.4 779.9L1366.7 768.1L1371.4 764.9L1376.1 753.6L1380.6 750.8L1385.3 764.9L1389.7 782.2L1394.7 790.7L1399.4 790.8" stroke="#ffeb3b" stroke-width="2" fill="none" stroke-linejoin="round"/></g>
<path d="M62 682.500H1911M62 897.500H1911M1855.500 98V925" stroke="#2a2e39" stroke-width="1" fill="none" shape-rendering="crispEdges"/>
<path d="M100.5 898V902M183.5 898V902M265.5 898V902M347.5 898V902M484.5 898V902M567.5 898V902M649.5 898V902M731.5 898V902M814.5 898V902M896.5 898V902M978.5 898V902M1060.5 898V902M1142.5 898V902M1225.5 898V902M1307.5 898V902M1389.5 898V902M1476.5 898V902M1558.5 898V902M1668.5 898V902M1750.5 898V902M1833.5 898V902" stroke="#2a2e39" stroke-width="1" fill="none" shape-rendering="crispEdges"/>
<text x="100.3" y="915.600" text-anchor="middle" font-family="Liberation Sans, sans-serif" font-size="12" fill="#b2b5be">14</text>
<text x="183.3" y="915.600" text-anchor="middle" font-family="Liberation Sans, sans-serif" font-size="12" fill="#b2b5be">17</text>
<text x="265.3" y="915.600" text-anchor="middle" font-family="Liberation Sans, sans-serif" font-size="12" fill="#b2b5be">22</text>
<text x="347.3" y="915.600" text-anchor="middle" font-family="Liberation Sans, sans-serif" font-size="12" fill="#b2b5be">25</text>
<text x="484.3" y="915.600" text-anchor="middle" font-family="Liberation Sans, sans-serif" font-size="12" fill="#b2b5be" font-weight="bold" textLength="19.5" lengthAdjust="spacingAndGlyphs">Sep</text>
<text x="567.3" y="915.600" text-anchor="middle" font-family="Liberation Sans, sans-serif" font-size="12" fill="#b2b5be">6</text>
<text x="649.3" y="915.600" text-anchor="middle" font-family="Liberation Sans, sans-serif" font-size="12" fill="#b2b5be">11</text>
<text x="731.3" y="915.600" text-anchor="middle" font-family="Liberation Sans, sans-serif" font-size="12" fill="#b2b5be">14</text>
<text x="814.3" y="915.600" text-anchor="middle" font-family="Liberation Sans, sans-serif" font-size="12" fill="#b2b5be">19</text>
<text x="896.3" y="915.600" text-anchor="middle" font-family="Liberation Sans, sans-serif" font-size="12" fill="#b2b5be">22</text>
<text x="978.3" y="915.600" text-anchor="middle" font-family="Liberation Sans, sans-serif" font-size="12" fill="#b2b5be">27</text>
<text x="1060.3" y="915.600" text-anchor="middle" font-family="Liberation Sans, sans-serif" font-size="12" fill="#b2b5be" font-weight="bold" textLength="19" lengthAdjust="spacingAndGlyphs">Oct</text>
<text x="1142.3" y="915.600" text-anchor="middle" font-family="Liberation Sans, sans-serif" font-size="12" fill="#b2b5be">5</text>
<text x="1225.3" y="915.600" text-anchor="middle" font-family="Liberation Sans, sans-serif" font-size="12" fill="#b2b5be">10</text>
<text x="1307.3" y="915.600" text-anchor="middle" font-family="Liberation Sans, sans-serif" font-size="12" fill="#b2b5be">13</text>
<text x="1389.3" y="915.600" text-anchor="middle" font-family="Liberation Sans, sans-serif" font-size="12" fill="#b2b5be">18</text>
<text x="1476.3" y="915.600" text-anchor="middle" font-family="Liberation Sans, sans-serif" font-size="12" fill="#b2b5be">23</text>
<text x="1558.3" y="915.600" text-anchor="middle" font-family="Liberation Sans, sans-serif" font-size="12" fill="#b2b5be">26</text>
<text x="1668.3" y="915.600" text-anchor="middle" font-family="Liberation Sans, sans-serif" font-size="12" fill="#b2b5be" font-weight="bold" textLength="20.5" lengthAdjust="spacingAndGlyphs">Nov</text>
<text x="1750.3" y="915.600" text-anchor="middle" font-family="Liberation Sans, sans-serif" font-size="12" fill="#b2b5be">6</text>
<text x="1833.3" y="915.600" text-anchor="middle" font-family="Liberation Sans, sans-serif" font-size="12" fill="#b2b5be">9</text>
<path d="M1856 121.5h4M1856 170.5h4M1856 219.5h4M1856 268.5h4M1856 317.5h4M1856 367.5h4M1856 416.5h4M1856 465.5h4M1856 514.5h4M1856 563.5h4M1856 612.5h4M1856 662.5h4M1856 720.5h4M1856 771.5h4M1856 822.5h4M1856 873.5h4" stroke="#2a2e39" stroke-width="1" fill="none" shape-rendering="crispEdges"/>
<text x="1865.500" y="125.5" font-family="Liberation Sans, sans-serif" font-size="12" fill="#b2b5be" textLength="35" lengthAdjust="spacingAndGlyphs">7.4400</text>
<text x="1865.500" y="174.5" font-family="Liberation Sans, sans-serif" font-size="12" fill="#b2b5be" textLength="35" lengthAdjust="spacingAndGlyphs">7.4200</text>
<text x="1865.500" y="223.5" font-family="Liberation Sans, sans-serif" font-size="12" fill="#b2b5be" textLength="35" lengthAdjust="spacingAndGlyphs">7.4000</text>
<text x="1865.500" y="272.5" font-family="Liberation Sans, sans-serif" font-size="12" fill="#b2b5be" textLength="35" lengthAdjust="spacingAndGlyphs">7.3800</text>
<text x="1865.500" y="321.5" font-family="Liberation Sans, sans-serif" font-size="12" fill="#b2b5be" textLength="35" lengthAdjust="spacingAndGlyphs">7.3600</text>
<text x="1865.500" y="371.5" font-family="Liberation Sans, sans-serif" font-size="12" fill="#b2b5be" textLength="35" lengthAdjust="spacingAndGlyphs">7.3400</text>
<text x="1865.500" y="420.5" font-family="Liberation Sans, sans-serif" font-size="12" fill="#b2b5be" textLength="35" lengthAdjust="spacingAndGlyphs">7.3200</text>
<text x="1865.500" y="469.5" font-family="Liberation Sans, sans-serif" font-size="12" fill="#b2b5be" textLength="35" lengthAdjust="spacingAndGlyphs">7.3000</text>
<text x="1865.500" y="518.5" font-family="Liberation Sans, sans-serif" font-size="12" fill="#b2b5be" textLength="35" lengthAdjust="spacingAndGlyphs">7.2800</text>
<text x="1865.500" y="567.5" font-family="Liberation Sans, sans-serif" font-size="12" fill="#b2b5be" textLength="35" lengthAdjust="spacingAndGlyphs">7.2600</text>
<text x="1865.500" y="616.5" font-family="Liberation Sans, sans-serif" font-size="12" fill="#b2b5be" textLength="35" lengthAdjust="spacingAndGlyphs">7.2400</text>
<text x="1865.500" y="666.5" font-family="Liberation Sans, sans-serif" font-size="12" fill="#b2b5be" textLength="35" lengthAdjust="spacingAndGlyphs">7.2200</text>
<text x="1865.500" y="723.7" font-family="Liberation Sans, sans-serif" font-size="12" fill="#b2b5be" textLength="29" lengthAdjust="spacingAndGlyphs">80.00</text>
<text x="1865.500" y="774.7" font-family="Liberation Sans, sans-serif" font-size="12" fill="#b2b5be" textLength="29" lengthAdjust="spacingAndGlyphs">60.00</text>
<text x="1865.500" y="825.7" font-family="Liberation Sans, sans-serif" font-size="12" fill="#b2b5be" textLength="29" lengthAdjust="spacingAndGlyphs">40.00</text>
<text x="1865.500" y="876.7" font-family="Liberation Sans, sans-serif" font-size="12" fill="#b2b5be" textLength="29" lengthAdjust="spacingAndGlyphs">20.00</text>
<path d="M1855 126.0h49.500a2.500 2.500 0 0 1 2.500 2.500v12a2.500 2.500 0 0 1 -2.500 2.500h-49.500z" fill="#ffeb3b"/>
<path d="M1856 134.5h4" stroke="#131722" stroke-width="1" opacity="0.7"/>
<text x="1865.500" y="138.8" font-family="Liberation Sans, sans-serif" font-size="12" fill="#131722" textLength="35" lengthAdjust="spacingAndGlyphs">7.4345</text>
<path d="M1855 189.0h49.500a2.500 2.500 0 0 1 2.500 2.500v12a2.500 2.500 0 0 1 -2.500 2.500h-49.500z" fill="#ffeb3b"/>
<path d="M1856 197.5h4" stroke="#131722" stroke-width="1" opacity="0.7"/>
<text x="1865.500" y="201.8" font-family="Liberation Sans, sans-serif" font-size="12" fill="#131722" textLength="35" lengthAdjust="spacingAndGlyphs">7.4089</text>
<path d="M1855 228.0h49.500a2.500 2.500 0 0 1 2.500 2.500v12a2.500 2.500 0 0 1 -2.500 2.500h-49.500z" fill="#ffeb3b"/>
<path d="M1856 236.5h4" stroke="#131722" stroke-width="1" opacity="0.7"/>
<text x="1865.500" y="240.8" font-family="Liberation Sans, sans-serif" font-size="12" fill="#131722" textLength="35" lengthAdjust="spacingAndGlyphs">7.3930</text>
<path d="M1855 291.0h49.500a2.500 2.500 0 0 1 2.500 2.500v12a2.500 2.500 0 0 1 -2.500 2.500h-49.500z" fill="#ffeb3b"/>
<path d="M1856 299.5h4" stroke="#131722" stroke-width="1" opacity="0.7"/>
<text x="1865.500" y="303.8" font-family="Liberation Sans, sans-serif" font-size="12" fill="#131722" textLength="35" lengthAdjust="spacingAndGlyphs">7.3674</text>
<path d="M1855 354.0h49.500a2.500 2.500 0 0 1 2.500 2.500v12a2.500 2.500 0 0 1 -2.500 2.500h-49.500z" fill="#ffeb3b"/>
<path d="M1856 362.5h4" stroke="#131722" stroke-width="1" opacity="0.7"/>
<text x="1865.500" y="366.8" font-family="Liberation Sans, sans-serif" font-size="12" fill="#131722" textLength="35" lengthAdjust="spacingAndGlyphs">7.3418</text>
<path d="M1855 393.0h49.500a2.500 2.500 0 0 1 2.500 2.500v12a2.500 2.500 0 0 1 -2.500 2.500h-49.500z" fill="#ffeb3b"/>
<path d="M1856 401.5h4" stroke="#131722" stroke-width="1" opacity="0.7"/>
<text x="1865.500" y="405.8" font-family="Liberation Sans, sans-serif" font-size="12" fill="#131722" textLength="35" lengthAdjust="spacingAndGlyphs">7.3259</text>
<path d="M1855 437.3h49.500a2.500 2.500 0 0 1 2.500 2.500v12a2.500 2.500 0 0 1 -2.500 2.500h-49.500z" fill="#ffeb3b"/>
<path d="M1856 445.8h4" stroke="#131722" stroke-width="1" opacity="0.7"/>
<text x="1865.500" y="450.1" font-family="Liberation Sans, sans-serif" font-size="12" fill="#131722" textLength="35" lengthAdjust="spacingAndGlyphs">7.3131</text>
<path d="M1855 456.0h49.500a2.500 2.500 0 0 1 2.500 2.500v12a2.500 2.500 0 0 1 -2.500 2.500h-49.500z" fill="#ffeb3b"/>
<path d="M1856 464.5h4" stroke="#131722" stroke-width="1" opacity="0.7"/>
<text x="1865.500" y="468.8" font-family="Liberation Sans, sans-serif" font-size="12" fill="#131722" textLength="35" lengthAdjust="spacingAndGlyphs">7.3003</text>
<path d="M1855 495.0h49.500a2.500 2.500 0 0 1 2.500 2.500v12a2.500 2.500 0 0 1 -2.500 2.500h-49.500z" fill="#ffeb3b"/>
<path d="M1856 503.5h4" stroke="#131722" stroke-width="1" opacity="0.7"/>
<text x="1865.500" y="507.8" font-family="Liberation Sans, sans-serif" font-size="12" fill="#131722" textLength="35" lengthAdjust="spacingAndGlyphs">7.2844</text>
<path d="M1855 558.0h49.500a2.500 2.500 0 0 1 2.500 2.500v12a2.500 2.500 0 0 1 -2.500 2.500h-49.500z" fill="#ffeb3b"/>
<path d="M1856 566.5h4" stroke="#131722" stroke-width="1" opacity="0.7"/>
<text x="1865.500" y="570.8" font-family="Liberation Sans, sans-serif" font-size="12" fill="#131722" textLength="35" lengthAdjust="spacingAndGlyphs">7.2588</text>
<path d="M1855 420.0h49.500a2.500 2.500 0 0 1 2.500 2.500v12a2.500 2.500 0 0 1 -2.500 2.500h-49.500z" fill="#26a69a"/>
<path d="M1856 428.5h4" stroke="#ffffff" stroke-width="1" opacity="0.7"/>
<text x="1865.500" y="432.8" font-family="Liberation Sans, sans-serif" font-size="12" fill="#ffffff" textLength="35" lengthAdjust="spacingAndGlyphs">7.3151</text>
<g stroke="#b2b5be" stroke-width="1.100" fill="none"><circle cx="1883.500" cy="911.500" r="5.200"/><path d="M1883.500 904v2M1883.500 917v2M1876 911.500h2M1889 911.500h2M1878.200 906.200l1.400 1.400M1887.400 915.400l1.400 1.400M1888.800 906.200l-1.400 1.400M1879.600 915.400l-1.400 1.400"/></g>
</svg>
<svg class="abs" style="left:0;top:0" width="700" height="720" viewBox="0 0 700 720">
<text x="71.5" y="120" font-family="Liberation Sans, sans-serif" font-size="16" fill="#d1d4dc" textLength="57" lengthAdjust="spacingAndGlyphs">USDCNH</text>
<text x="132.5" y="120" font-family="Liberation Sans, sans-serif" font-size="16" fill="#787b86">·</text>
<text x="141" y="120" font-family="Liberation Sans, sans-serif" font-size="16" fill="#d1d4dc" textLength="16.5" lengthAdjust="spacingAndGlyphs">4h</text>
<circle cx="182" cy="114" r="8.500" fill="#26a69a" fill-opacity="0.28"/><circle cx="182" cy="114" r="4" fill="#2fae9c"/>
<text x="207" y="120" font-family="Liberation Sans, sans-serif" font-size="12" fill="#b2b5be" textLength="8" lengthAdjust="spacingAndGlyphs">O</text>
<text x="216.5" y="120" font-family="Liberation Sans, sans-serif" font-size="12" fill="#26a69a" textLength="38" lengthAdjust="spacingAndGlyphs">7.3151</text>
<text x="262" y="120" font-family="Liberation Sans, sans-serif" font-size="12" fill="#b2b5be" textLength="8" lengthAdjust="spacingAndGlyphs">H</text>
<text x="271.5" y="120" font-family="Liberation Sans, sans-serif" font-size="12" fill="#26a69a" textLength="38" lengthAdjust="spacingAndGlyphs">7.3163</text>
<text x="316" y="120" font-family="Liberation Sans, sans-serif" font-size="12" fill="#b2b5be" textLength="6" lengthAdjust="spacingAndGlyphs">L</text>
<text x="323.5" y="120" font-family="Liberation Sans, sans-serif" font-size="12" fill="#26a69a" textLength="38.5" lengthAdjust="spacingAndGlyphs">7.3122</text>
<text x="368.5" y="120" font-family="Liberation Sans, sans-serif" font-size="12" fill="#b2b5be" textLength="7.5" lengthAdjust="spacingAndGlyphs">C</text>
<text x="377.5" y="120" font-family="Liberation Sans, sans-serif" font-size="12" fill="#26a69a" textLength="38" lengthAdjust="spacingAndGlyphs">7.3151</text>
<text x="422" y="120" font-family="Liberation Sans, sans-serif" font-size="12" fill="#26a69a" textLength="85" lengthAdjust="spacingAndGlyphs">0.0000 (0.00%)</text>
<rect x="70.500" y="130.500" width="54" height="37" rx="3" fill="#0f121b" stroke="#ef5350" stroke-width="1"/>
<text x="78.5" y="153.5" font-family="Liberation Sans, sans-serif" font-size="12.5" fill="#ef5350" textLength="37.5" lengthAdjust="spacingAndGlyphs">7.3151</text>
<text x="142" y="141" font-family="Liberation Sans, sans-serif" font-size="11" fill="#d1d4dc" textLength="15" lengthAdjust="spacingAndGlyphs">1.4</text>
<rect x="129" y="146.500" width="41" height="21" rx="3" fill="#1e222d"/>
<text x="137" y="160.5" font-family="Liberation Sans, sans-serif" font-size="13" fill="#e0e3eb" textLength="23.5" lengthAdjust="spacingAndGlyphs">0.01</text>
<rect x="174.500" y="130.500" width="54" height="37" rx="3" fill="#0f121b" stroke="#26a69a" stroke-width="1"/>
<text x="182.5" y="153.5" font-family="Liberation Sans, sans-serif" font-size="12.5" fill="#26a69a" textLength="37.5" lengthAdjust="spacingAndGlyphs">7.3165</text>
<text x="71.5" y="188.5" font-family="Liberation Sans, sans-serif" font-size="12" fill="#d1d4dc" textLength="23" lengthAdjust="spacingAndGlyphs">EMA</text>
<text x="99" y="188.5" font-family="Liberation Sans, sans-serif" font-size="12" fill="#9598a1" textLength="64.5" lengthAdjust="spacingAndGlyphs">200 close 0</text>
<text x="172" y="188.5" font-family="Liberation Sans, sans-serif" font-size="12" fill="#f44336" textLength="38" lengthAdjust="spacingAndGlyphs">7.2985</text>
<text x="71.5" y="212.5" font-family="Liberation Sans, sans-serif" font-size="12" fill="#d1d4dc" textLength="23" lengthAdjust="spacingAndGlyphs">EMA</text>
<text x="99" y="212.5" font-family="Liberation Sans, sans-serif" font-size="12" fill="#9598a1" textLength="64.5" lengthAdjust="spacingAndGlyphs">200 close 0</text>
<text x="172" y="212.5" font-family="Liberation Sans, sans-serif" font-size="12" fill="#f44336" textLength="38" lengthAdjust="spacingAndGlyphs">7.2985</text>
<text x="71.5" y="236.5" font-family="Liberation Sans, sans-serif" font-size="12" fill="#d1d4dc" textLength="23" lengthAdjust="spacingAndGlyphs">EMA</text>
<text x="99" y="236.5" font-family="Liberation Sans, sans-serif" font-size="12" fill="#9598a1" textLength="64.5" lengthAdjust="spacingAndGlyphs">100 close 0</text>
<text x="172" y="236.5" font-family="Liberation Sans, sans-serif" font-size="12" fill="#2e8cf0" textLength="38" lengthAdjust="spacingAndGlyphs">7.3070</text>
<text x="71.5" y="260.5" font-family="Liberation Sans, sans-serif" font-size="12" fill="#d1d4dc" textLength="23" lengthAdjust="spacingAndGlyphs">EMA</text>
<text x="99" y="260.5" font-family="Liberation Sans, sans-serif" font-size="12" fill="#9598a1" textLength="64.5" lengthAdjust="spacingAndGlyphs">200 close 0</text>
<text x="172" y="260.5" font-family="Liberation Sans, sans-serif" font-size="12" fill="#f44336" textLength="38" lengthAdjust="spacingAndGlyphs">7.2985</text>
<text x="71.5" y="284.5" font-family="Liberation Sans, sans-serif" font-size="12" fill="#d1d4dc" textLength="23" lengthAdjust="spacingAndGlyphs">EMA</text>
<text x="99" y="284.5" font-family="Liberation Sans, sans-serif" font-size="12" fill="#9598a1" textLength="57.5" lengthAdjust="spacingAndGlyphs">50 close 0</text>
<text x="165" y="284.5" font-family="Liberation Sans, sans-serif" font-size="12" fill="#aa00ff" textLength="38" lengthAdjust="spacingAndGlyphs">7.3098</text>
<rect x="71.500" y="295.500" width="28" height="19" rx="2" fill="#131722" stroke="#363a45" stroke-width="1"/>
<path d="M82 307.500L85.500 304L89 307.500" stroke="#d1d4dc" stroke-width="1.300" fill="none"/>
<text x="71.5" y="704" font-family="Liberation Sans, sans-serif" font-size="12" fill="#d1d4dc" textLength="16" lengthAdjust="spacingAndGlyphs">RSI</text>
<text x="93" y="704" font-family="Liberation Sans, sans-serif" font-size="12" fill="#9598a1" textLength="12.5" lengthAdjust="spacingAndGlyphs">14</text>
<text x="114.5" y="704" font-family="Liberation Sans, sans-serif" font-size="12" fill="#ffeb3b" textLength="31" lengthAdjust="spacingAndGlyphs">52.37</text>
</svg>
<div id="hdr"></div><div id="hdrline"></div>
<div class="abs" style="left:14px;top:22px;width:20px;height:2px;background:#fff"></div>
<div class="abs" style="left:14px;top:27px;width:20px;height:2px;background:#fff"></div>
<div class="abs" style="left:14px;top:32px;width:20px;height:2px;background:#fff"></div>
<svg class="abs" style="left:100px;top:8px" width="170" height="44" viewBox="0 0 170 44">
<defs><linearGradient id="lg" x1="0" y1="0" x2="0" y2="1"><stop offset="0" stop-color="#ffffff"/><stop offset="0.55" stop-color="#f0f2f6"/><stop offset="1" stop-color="#8c98ad"/></linearGradient></defs>
<text x="6.500" y="32" font-family="Liberation Sans, sans-serif" font-size="31" fill="url(#lg)" stroke="#202632" stroke-width="0.9" textLength="143" lengthAdjust="spacingAndGlyphs">ActivTrader</text>
<text x="151" y="15.500" font-family="Liberation Sans, sans-serif" font-size="9" fill="#e8ebf0">™</text></svg>
<div class="abs" style="left:382px;top:5px;width:161px;height:43px;border:1px solid #5d6674;border-radius:5px"></div>
<div class="abs" style="left:412px;top:19px;font-size:16px;color:#e3e6ec">+</div>
<div class="abs" style="left:434px;top:19px;font-size:16px;color:#e3e6ec;letter-spacing:-0.1px">New Order</div>
<svg class="abs" style="left:1390px;top:0" width="400" height="59" viewBox="1390 0 400 59" font-family="Liberation Sans, sans-serif"><text x="1403.7" y="25.500" font-size="15.5" fill="#e6e9ee" textLength="85.3" lengthAdjust="spacingAndGlyphs">10 000.00 €</text><text x="1403.7" y="42.700" font-size="15" fill="#c6cad3" textLength="43.8" lengthAdjust="spacingAndGlyphs">Balance</text><text x="1523.8" y="25.500" font-size="15.5" fill="#e6e9ee" textLength="85.7" lengthAdjust="spacingAndGlyphs">10 000.00 €</text><text x="1523.8" y="42.700" font-size="15" fill="#c6cad3" textLength="36.2" lengthAdjust="spacingAndGlyphs">Equity</text><text x="1643.6" y="25.500" font-size="15.5" fill="#e6e9ee" textLength="45.1" lengthAdjust="spacingAndGlyphs">0.00 €</text><text x="1643.6" y="42.700" font-size="15" fill="#c6cad3" textLength="30.7" lengthAdjust="spacingAndGlyphs">Swap</text><text x="1722.8" y="25.500" font-size="15.5" fill="#e6e9ee" textLength="44.8" lengthAdjust="spacingAndGlyphs">0.00 €</text><text x="1722.8" y="42.700" font-size="15" fill="#c6cad3" textLength="31.5" lengthAdjust="spacingAndGlyphs">Profit</text></svg>
<div class="abs" style="left:1773px;top:42px;width:0;height:0;border-left:4px solid transparent;border-right:4px solid transparent;border-top:5px solid #e3e6ec"></div>
<svg class="abs" style="left:1805px;top:21px" width="28" height="22" viewBox="0 0 28 22"><rect x="3" y="3.5" width="21" height="14.5" rx="1.5" fill="none" stroke="#aab0bb" stroke-width="1.8"/><path d="M3.5 5 L13.5 12.5 L23.5 5" fill="none" stroke="#aab0bb" stroke-width="1.8"/></svg>
<svg class="abs" style="left:1866px;top:15px" width="32" height="32" viewBox="0 0 32 32"><defs><clipPath id="ac"><circle cx="16" cy="16" r="14"/></clipPath></defs><circle cx="16" cy="16" r="14" fill="#121620"/><g clip-path="url(#ac)"><circle cx="16" cy="12" r="6" fill="#aab0bb"/><ellipse cx="16" cy="27" rx="11" ry="7.5" fill="#aab0bb"/></g></svg>
<div class="abs" style="left:1900px;top:42px;width:0;height:0;border-left:4px solid transparent;border-right:4px solid transparent;border-top:5px solid #e3e6ec"></div>
<div class="vl" style="left:7px;top:60px;height:903px"></div>
<div class="vl" style="left:61px;top:60px;height:903px"></div>
<div class="hl" style="left:8px;top:359px;width:53px"></div>
<div class="hl" style="left:8px;top:444px;width:53px"></div>
<div class="hl" style="left:8px;top:601px;width:53px"></div>
<svg class="abs" style="left:0;top:60px" width="62" height="600" viewBox="0 60 62 600" fill="none" stroke="#8f929c" stroke-width="1.1" stroke-linecap="round" stroke-linejoin="round"><g stroke="#2e8cf0" stroke-width="1.4" stroke-linecap="butt"><path d="M34.5 72V80M34.5 87V95M23 83.5H31M38 83.5H46"/></g><circle cx="25.3" cy="127.5" r="2.1"/><circle cx="42.5" cy="110.5" r="2.1"/><path d="M26.9 125.9L40.9 112.1"/><circle cx="25.3" cy="152.5" r="2.1"/><circle cx="25.3" cy="163.5" r="2.1"/><circle cx="36.6" cy="163.5" r="2.1"/><path d="M26.8 151L34 144M26.8 162L39.5 149.5M38.1 162L45 155M26.8 154L35.1 162"/><path d="M22.2 199.6C25 195 27 190 31 189C35 188.5 38.5 191.5 37.5 195C36.5 198.5 32 199.6 22.2 199.6Z"/><path d="M37.2 184.6C36.2 187 38 189.5 40.2 189L46.3 183.2"/><path d="M28.2 220V218.2H41V220M34.6 218.2V235.5M32 235.5H37.2"/><circle cx="28.5" cy="254.5" r="2.2"/><circle cx="40.5" cy="255.4" r="2.2"/><circle cx="32.6" cy="261.6" r="2.2"/><circle cx="43.5" cy="268.4" r="2.2"/><circle cx="25.4" cy="271.4" r="2.2"/><path d="M25.8 269.2L28.1 256.7M29.6 256.4L31.5 259.7M31.3 263.4L26.7 269.6M34.3 260.2L38.8 256.8M41.0 257.5L43.0 266.3M41.6 267.2L34.5 262.8"/><circle cx="24.5" cy="291.2" r="2.1"/><circle cx="24.5" cy="301.4" r="2.1"/><circle cx="42.7" cy="301.4" r="2.1"/><circle cx="24.5" cy="307.6" r="2.1"/><path d="M26.8 291.2H44M26.8 301.4H40.5M26.8 307.6H44"/><path d="M29.5 299L42 293.3" stroke-dasharray="1 3"/><circle cx="33.1" cy="335.3" r="8"/><circle cx="30.3" cy="332.6" r="1" fill="#8f929c" stroke="none"/><circle cx="35.9" cy="332.6" r="1" fill="#8f929c" stroke="none"/><path d="M29 337.2C30.5 340.6 35.7 340.6 37.2 337.2"/><g transform="translate(34.1 384) rotate(-44)"><rect x="-13.2" y="-3.4" width="26.4" height="6.8" rx="0.8"/><path d="M-9 -3.4V-1M-5 -3.4V-0.2M-1 -3.4V-1M3 -3.4V-0.2M7 -3.4V-1M10.5 -3.4V-1"/></g><circle cx="32.6" cy="418.7" r="8.2"/><path d="M28.6 418.7H36.6M32.6 414.7V422.7M38.6 424.7L41.8 427.9"/><path d="M26.1 477.7V467C26.1 456.5 41.8 456.5 41.8 467V477.7H36.7V467C36.7 463.6 31.2 463.6 31.2 467V477.7Z"/><path d="M26.1 473.7H31.2M36.7 473.7H41.8"/><path d="M23.1 509.6L24.3 504.4L35.3 493.4C36.3 492.4 37.3 492.4 38.3 493.4L39.3 494.4C40.3 495.4 40.3 496.4 39.3 497.4L33 503.7M23.1 509.6L28.3 508.4L30 506.7M24.3 504.4L28.3 508.4M33.8 494.9L37.8 498.9M27 504L36 495"/><rect x="35.6" y="508" width="8.2" height="6.3" rx="0.8"/><path d="M37.6 508V505.6C37.6 503.2 41.6 503.2 41.6 505.3"/><path d="M39.7 510.5V511.8"/><rect x="26.2" y="539.3" width="15.6" height="11.1" rx="1.8"/><path d="M29.8 539.3V536.5C29.8 531.4 37.7 531.4 37.7 535.6"/><path d="M33.9 543.6V545.8" stroke-width="1.4"/><path d="M24 572.7C28 564 38.5 564 42.6 572.7C38.5 581.5 28 581.5 24 572.7Z"/><circle cx="33.1" cy="572.7" r="3.2"/><path d="M34.6 587.3C36 585 37.5 583.6 39 583.6C40.5 583.8 40.8 585.2 39.8 586.2C38.6 587.2 37 587.3 34.6 587.3ZM40.3 584L44.4 581.2" stroke-width="0.9"/><path d="M25.2 620.3H42.6M30.6 620.3V618.4C30.6 617.7 31 617.4 31.6 617.4H36.2C36.8 617.4 37.2 617.7 37.2 618.4V620.3M27.4 620.3V633.3C27.4 634.7 28.3 635.5 29.6 635.5H38.2C39.5 635.5 40.4 634.7 40.4 633.3V620.3M31.8 624V631.4M36 624V631.4"/></svg>
<svg class="abs" style="left:0;top:510px" width="8" height="24" viewBox="0 510 8 24"><path d="M-1 513.5L5.6 522L-1 530.5" fill="none" stroke="#2e8cf0" stroke-width="1.5"/></svg>
<div class="hl" style="left:62px;top:97px;width:1849px"></div>
<div class="vl" style="left:162px;top:60px;height:37px"></div>
<div class="vl" style="left:200px;top:60px;height:37px"></div>
<div class="vl" style="left:239px;top:60px;height:37px"></div>
<div class="vl" style="left:341px;top:60px;height:37px"></div>
<div class="vl" style="left:449px;top:60px;height:37px"></div>
<div class="vl" style="left:512px;top:60px;height:37px"></div>
<div class="vl" style="left:1703px;top:60px;height:37px"></div>
<div class="vl" style="left:1742px;top:60px;height:37px"></div>
<div class="vl" style="left:1833px;top:60px;height:37px"></div>
<div class="vl" style="left:1872px;top:60px;height:37px"></div>
<div class="abs" style="left:71px;top:70px;font-size:14px;font-weight:bold;color:#787b86;letter-spacing:-1.2px">USDCNH</div>
<div class="abs t14" style="left:176px;top:70px">D</div>
<svg class="abs" style="left:210px;top:66px" width="22" height="26" viewBox="210 66 22 26" fill="none" stroke="#8f929c" stroke-width="1.1"><path d="M216.5 68V71M216.5 85V88M224.5 71.5V74M224.5 82V85.5"/><rect x="214.5" y="71" width="4" height="14"/><rect x="222.500" y="74" width="4" height="8"/></svg>
<svg class="abs" style="left:246px;top:66px" width="24" height="24" viewBox="246 66 24 24" fill="none" stroke="#8f929c" stroke-width="1.1"><circle cx="258.4" cy="78.3" r="9.2"/><path d="M254.4 78.3H262.4M258.4 74.3V82.3"/></svg>
<div class="abs t14" style="left:275px;top:70px;letter-spacing:-0.25px">Compare</div>
<svg class="abs" style="left:350px;top:66px" width="22" height="24" viewBox="350 66 22 24" fill="none" stroke="#8f929c" stroke-width="1.1" stroke-linecap="round"><path d="M354.5 86.5C357 87.5 358.3 86 358.6 83L360 72.5C360.4 70 362 69.3 363.8 70.3M356 76.5H363.5M362.5 81.5L366.8 85.8M366.8 81.5L362.5 85.8"/></svg>
<div class="abs t14" style="left:377px;top:70px;letter-spacing:-0.1px">Indicators</div>
<svg class="abs" style="left:456px;top:68px" width="50" height="20" viewBox="456 68 50 20" fill="none" stroke-width="1.2" stroke-linecap="round" stroke-linejoin="round"><path d="M463.5 72.5L459.5 76.5L463.5 80.5M459.8 76.5H468C471 76.5 472.8 78.500 472.8 82" stroke="#8f929c"/><path d="M496.500 72.5L500.5 76.5L496.500 80.5M500.2 76.5H492C489 76.5 487.2 78.500 487.2 82" stroke="#4a4e5a"/></svg>
<svg class="abs" style="left:1710px;top:66px" width="200" height="26" viewBox="1710 66 200 26" fill="none" stroke="#8f929c" stroke-width="1.1" stroke-linecap="round" stroke-linejoin="round"><rect x="1714.5" y="70.5" width="18" height="16" rx="1.8"/><path d="M1754 86.500H1771.5C1775.5 86.500 1775.8 81 1771.8 79.8C1771.5 74 1766 69.500 1761 72C1758.500 73.500 1757.500 75.500 1757.500 77.500C1749.500 78 1749.800 86.500 1754 86.500Z" stroke-dasharray="3 2"/><path d="M1819.500 76.500L1823 80L1826.500 76.500"/></svg>
<div class="abs t14" style="left:1778px;top:70px;letter-spacing:-0.75px">Save</div>
<svg class="abs" style="left:1840px;top:66px" width="26" height="26" viewBox="1840 66 26 26" fill="none" stroke="#8f929c" stroke-width="1.1" stroke-linejoin="round"><path d="M1851.2 71.2L1851.5 68.7L1854.5 68.7L1854.8 71.2L1856.7 72.0L1858.6 70.4L1860.8 72.6L1859.2 74.5L1860.0 76.4L1862.5 76.7L1862.5 79.7L1860.0 80.0L1859.2 81.9L1860.8 83.8L1858.6 86.0L1856.7 84.4L1854.8 85.2L1854.5 87.7L1851.5 87.7L1851.2 85.2L1849.3 84.4L1847.4 86.0L1845.2 83.8L1846.8 81.9L1846.0 80.0L1843.5 79.7L1843.5 76.7L1846.0 76.4L1846.8 74.5L1845.2 72.6L1847.4 70.4L1849.3 72.0Z"/><circle cx="1853" cy="78.2" r="2.6"/></svg>
<svg class="abs" style="left:1878px;top:66px" width="28" height="24" viewBox="1878 66 28 24" fill="none" stroke="#8f929c" stroke-width="1.1" stroke-linejoin="round"><path d="M1883.500 72.500H1886.500L1888 69.800H1895L1896.500 72.500H1899.500C1900.800 72.500 1901.500 73.200 1901.500 74.500V83.500C1901.500 84.800 1900.800 85.500 1899.500 85.500H1883.500C1882.200 85.500 1881.500 84.800 1881.500 83.500V74.500C1881.500 73.200 1882.200 72.500 1883.500 72.500Z"/><circle cx="1891.500" cy="78.800" r="3.8"/></svg>
<div class="hl" style="left:62px;top:925px;width:1849px"></div>
<div id="botstrip"></div><div id="rstrip"></div>
<div class="vl" style="left:220px;top:926px;height:37px"></div>
<div class="vl" style="left:482px;top:934px;height:22px"></div>
<div class="vl" style="left:1794px;top:934px;height:22px"></div>
<div class="abs" style="left:78px;top:938px;font-size:13px;color:#d1d4dc;letter-spacing:-0.6px">Powered by <span style="color:#2e8cf0">TradingView</span></div>
<div class="abs t14" style="left:237px;top:937px;letter-spacing:-0.75px">1D</div>
<div class="abs t14" style="left:267px;top:937px;letter-spacing:-0.75px">5D</div>
<div class="abs t14" style="left:298px;top:937px;letter-spacing:-0.75px">1M</div>
<div class="abs t14" style="left:328px;top:937px;letter-spacing:-0.75px">3M</div>
<div class="abs t14" style="left:359px;top:937px;letter-spacing:-0.75px">6M</div>
<div class="abs t14" style="left:391px;top:937px;letter-spacing:-0.75px">1Y</div>
<div class="abs t14" style="left:420px;top:937px;letter-spacing:-0.75px">5Y</div>
<div class="abs t14" style="left:449px;top:937px;letter-spacing:-0.75px">All</div>
<svg class="abs" style="left:496px;top:934px" width="24" height="22" viewBox="496 934 24 22" fill="none" stroke="#8f929c" stroke-width="1.1" stroke-linecap="round" stroke-linejoin="round"><path d="M500.500 942V940C500.500 939 501.200 938.500 502 938.500H513C514 938.500 514.500 939 514.500 940V950C514.500 951 514 951.500 513 951.500H509M500.500 941.500H514.500M504 936.500V939M511 936.500V939M499 947.500H506.500M504 945L506.500 947.500L504 950"/></svg>
<div class="abs t14" style="left:1669px;top:937px;letter-spacing:-0.24px">08:31:00 (UTC+2)</div>
<div class="abs t14" style="left:1811px;top:936px;font-size:15px">%</div>
<div class="abs t14" style="left:1839px;top:937px;letter-spacing:-0.3px">log</div>
<div class="abs t14" style="left:1871px;top:937px;letter-spacing:-0.3px">auto</div>
<div class="abs" style="left:1889px;top:922px;width:46px;height:46px;border-radius:23px;background:#202632"></div>
<svg class="abs" style="left:1896px;top:934px" width="16" height="24" viewBox="1896 934 16 24"><path d="M1907.400 938.500L1900.400 945.800L1907.400 953.300" fill="none" stroke="#3d95f0" stroke-width="2.200"/></svg>
<div class="abs" style="left:55px;top:879px;width:9px;height:27px;border:1px solid #2a2e39;border-radius:4px;background:#131722"></div>
<div class="abs" style="left:57px;top:883px;font-size:14px;color:#8f929c">‹</div>
</div></body></html>
